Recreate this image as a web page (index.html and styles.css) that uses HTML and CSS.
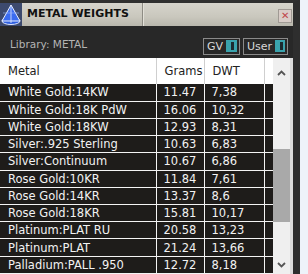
FILE: index.html
```html
<!DOCTYPE html>
<html lang="en">
<head>
    <meta charset="UTF-8">
    <title>Metal Weights</title>
    <link rel="stylesheet" href="styles.css">
</head>
<body>

    <div class="window">
        <!-- Barra de título -->
        <div class="titlebar">
            <div class="app-icon">
                <svg width="22" height="23" viewBox="0 0 22 23">
                    <rect width="22" height="23" fill="#3d4a6e"/>
                    <ellipse cx="11" cy="18" rx="9" ry="3.5" fill="#2f5fe0" stroke="#dfe8ff" stroke-width="1"/>
                    <polygon points="11,2 2,18 20,18" fill="#3b6cf0" stroke="#e8efff" stroke-width="1"/>
                    <line x1="11" y1="2" x2="11" y2="20" stroke="#e8efff" stroke-width="0.8"/>
                    <line x1="3" y1="10" x2="19" y2="10" stroke="#9fb8ff" stroke-width="0.6"/>
                </svg>
            </div>
            <div class="title">METAL WEIGHTS</div>
            <div class="title-fill">
                <button class="close">&#x2715;</button>
            </div>
        </div>

        <!-- Barra da biblioteca -->
        <div class="toolbar">
            <span class="library">Library: METAL</span>
            <div class="toggles">
                <div class="toggle toggle-gv"><span>GV</span><i></i></div>
                <div class="toggle toggle-user"><span>User</span><i></i></div>
            </div>
        </div>

        <!-- Tabela -->
        <div class="grid">
            <table class="weights">
                <thead>
                    <tr>
                        <th class="col-metal">Metal</th>
                        <th class="col-grams">Grams</th>
                        <th class="col-dwt">DWT</th>
                        <th class="col-fill"></th>
                    </tr>
                </thead>
                <tbody>
                    <tr><td>White Gold:14KW</td><td>11.47</td><td>7,38</td><td></td></tr>
                    <tr><td>White Gold:18K PdW</td><td>16.06</td><td>10,32</td><td></td></tr>
                    <tr><td>White Gold:18KW</td><td>12.93</td><td>8,31</td><td></td></tr>
                    <tr><td>Silver:.925 Sterling</td><td>10.63</td><td>6,83</td><td></td></tr>
                    <tr><td>Silver:Continuum</td><td>10.67</td><td>6,86</td><td></td></tr>
                    <tr><td>Rose Gold:10KR</td><td>11.84</td><td>7,61</td><td></td></tr>
                    <tr><td>Rose Gold:14KR</td><td>13.37</td><td>8,6</td><td></td></tr>
                    <tr><td>Rose Gold:18KR</td><td>15.81</td><td>10,17</td><td></td></tr>
                    <tr><td>Platinum:PLAT RU</td><td>20.58</td><td>13,23</td><td></td></tr>
                    <tr><td>Platinum:PLAT</td><td>21.24</td><td>13,66</td><td></td></tr>
                    <tr><td>Palladium:PALL .950</td><td>12.72</td><td>8,18</td><td></td></tr>
                </tbody>
            </table>
            <div class="scrollbar">
                <svg class="arrow arrow-up" width="9" height="6" viewBox="0 0 9 6">
                    <polyline points="1,5 4.5,1.5 8,5" fill="none" stroke="#555" stroke-width="1.8"/>
                </svg>
                <div class="track-top"></div>
                <div class="thumb"></div>
                <div class="track-bottom"></div>
                <svg class="arrow arrow-down" width="9" height="6" viewBox="0 0 9 6">
                    <polyline points="1,1 4.5,4.5 8,1" fill="none" stroke="#555" stroke-width="1.8"/>
                </svg>
            </div>
        </div>
    </div>

</body>
</html>
```

FILE: styles.css
```css
* {
    box-sizing: border-box;
    margin: 0;
    padding: 0;
}

body {
    width: 308px;
    height: 274px;
    overflow: hidden;
    background-color: #eef3fa;
    font-family: 'DejaVu Sans', Verdana, sans-serif;
}

.window {
    width: 300px;
    height: 274px;
    background-color: #282828;
    border-right: 7px solid #2e2e2e;
    border-top: 3px solid #303030;
    overflow: hidden;
}

.titlebar {
    display: flex;
    height: 23px;
    background: linear-gradient(#d6d4cc, #c9c7bd 60%, #b9b7ad);
}

.app-icon {
    width: 22px;
    height: 23px;
}

.title {
    width: 121px;
    padding: 4px 0 0 5px;
    font-size: 11px;
    font-weight: bold;
    color: #111;
    border-right: 1px solid #8e8c84;
}

.title-fill {
    flex: 1;
    display: flex;
    justify-content: flex-end;
    align-items: center;
    padding-right: 1px;
    border-left: 1px solid #e2e0d8;
}

.close {
    width: 14px;
    height: 14px;
    margin-top: 3px;
    border: 1px solid #a09a94;
    background-color: #d9cdc8;
    color: #c0464a;
    font-size: 10px;
    line-height: 12px;
    text-align: center;
}

.toolbar {
    display: flex;
    justify-content: space-between;
    align-items: center;
    height: 32px;
    padding: 4px 5px 0 10px;
}

.library {
    font-size: 10.5px;
    color: #b4b4b4;
}

.toggles {
    display: flex;
    gap: 3px;
    margin-top: 4px;
}

.toggle {
    display: flex;
    align-items: center;
    gap: 3px;
    height: 17px;
    padding: 0 2px 0 3px;
    border: 1px solid #8a8a8a;
    font-size: 11px;
    color: #d8d8d8;
}

.toggle-gv {
    width: 37px;
}

.toggle-user {
    width: 45px;
}

.toggle i {
    margin-left: auto;
    width: 12px;
    height: 12px;
    background-color: #3aa3ad;
    position: relative;
}

.toggle i::after {
    content: "";
    position: absolute;
    left: 5px;
    top: 2px;
    width: 3px;
    height: 8px;
    background-color: #1c2b30;
}

.grid {
    display: flex;
}

.weights {
    width: 273px;
    border-collapse: collapse;
    table-layout: fixed;
    font-size: 11.5px;
}

.weights th {
    height: 26px;
    background-color: #fff;
    color: #222;
    font-weight: normal;
    text-align: left;
    padding-left: 8px;
    border-right: 1px solid #cfcfcf;
}

.weights th.col-fill {
    border-right: none;
}

.col-metal {
    width: 156px;
}

.col-grams {
    width: 48px;
}

.col-dwt {
    width: 60px;
}

.weights td {
    height: 17px;
    padding: 0 0 0 7px;
    background-color: #1e1c1a;
    color: #f2f2f2;
    border-bottom: 1px solid #f4f4f4;
    border-right: 1px solid #f4f4f4;
    white-space: nowrap;
    overflow: hidden;
}

.weights td:first-child {
    padding-left: 8px;
}

.weights td:last-child {
    border-right: none;
}

.scrollbar {
    width: 17px;
    height: 216px;
    display: flex;
    flex-direction: column;
    align-items: center;
    background-color: #efefef;
    border-right: 3px solid #dcdcdc;
    box-sizing: content-box;
}

.arrow {
    flex: none;
}

.arrow-up {
    margin: 12px 0 4px;
}

.track-top {
    height: 69px;
}

.thumb {
    width: 17px;
    height: 73px;
    background-color: #a9a9a9;
}

.track-bottom {
    flex: 1;
}

.arrow-down {
    margin: 4px 0 6px;
}
```
